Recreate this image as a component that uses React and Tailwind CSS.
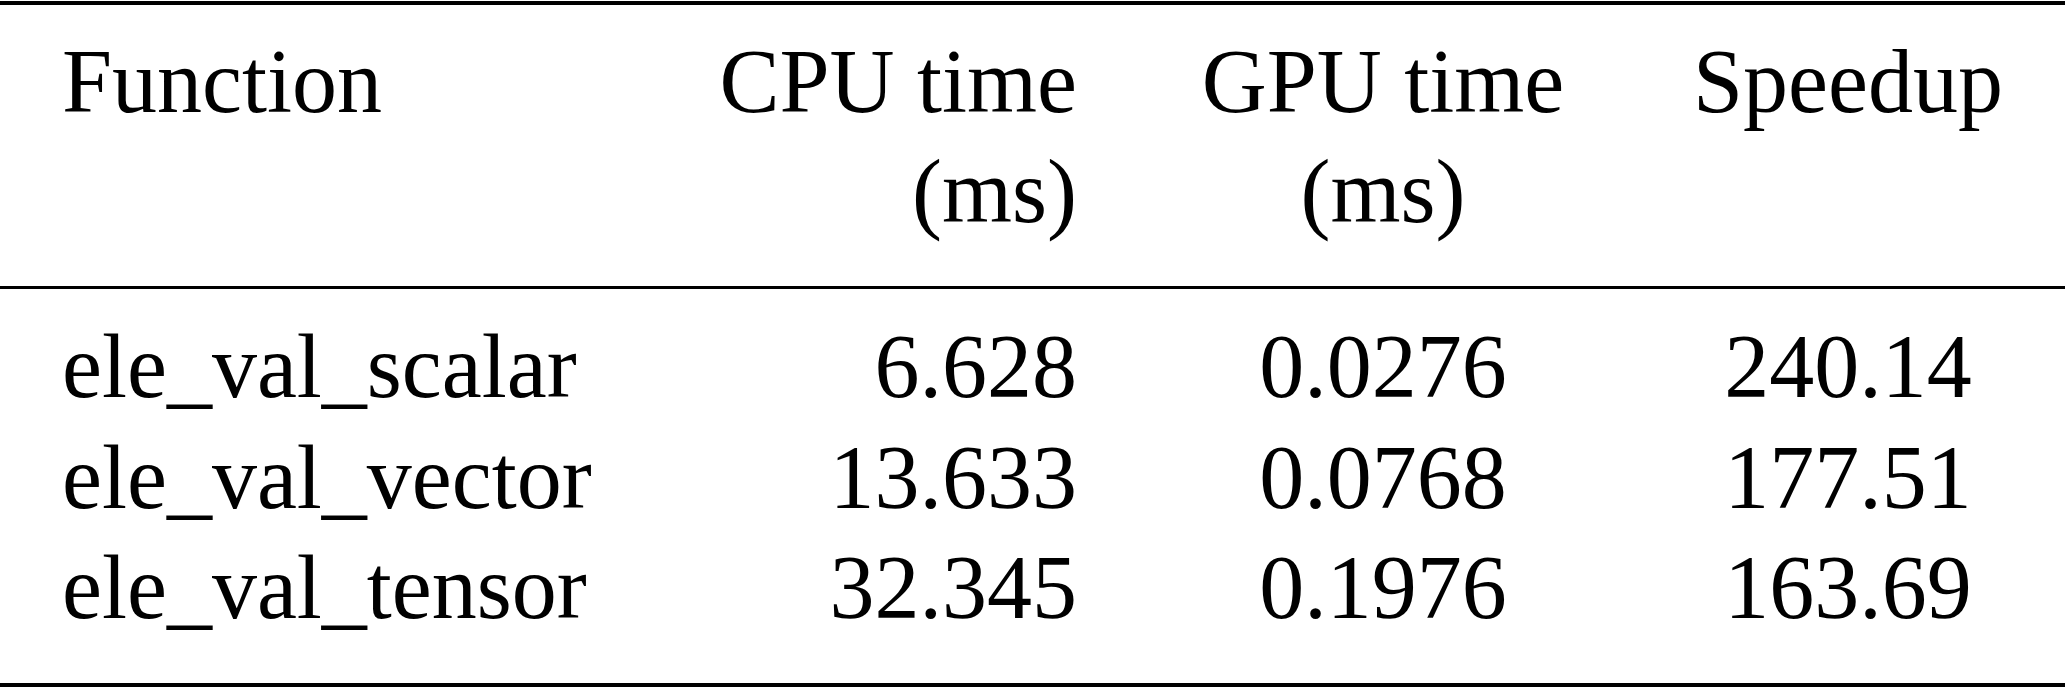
import React from "react";

const rows = [
  ["ele_val_scalar", "6.628", "0.0276", "240.14"],
  ["ele_val_vector", "13.633", "0.0768", "177.51"],
  ["ele_val_tensor", "32.345", "0.1976", "163.69"],
];

export default function App() {
  return (
    <div
      className="w-[2067px] h-[687px] bg-white text-black overflow-hidden"
      style={{ fontFamily: '"Liberation Serif", "Times New Roman", serif' }}
    >
      <div className="mt-[1px] h-[4px] w-[2065px] bg-black" />
      <div className="pt-[22px] grid grid-cols-[650px_427px_612px_318px] text-[90px] leading-[110px]">
        <div className="pl-[62px]">Function</div>
        <div className="text-right">
          <div>CPU time</div>
          <div>(ms)</div>
        </div>
        <div className="text-center">
          <div>GPU time</div>
          <div>(ms)</div>
        </div>
        <div className="text-center">Speedup</div>
      </div>
      <div className="mt-[39px] h-[3px] w-[2065px] bg-black" />
      <div className="pt-[23px] grid grid-cols-[650px_427px_612px_318px] text-[90px] leading-[110.5px]">
        {rows.map((r) => (
          <React.Fragment key={r[0]}>
            <div className="pl-[62px]">{r[0]}</div>
            <div className="text-right">{r[1]}</div>
            <div className="text-center">{r[2]}</div>
            <div className="text-center">{r[3]}</div>
          </React.Fragment>
        ))}
      </div>
      <div className="mt-[39px] h-[4px] w-[2065px] bg-black" />
    </div>
  );
}
